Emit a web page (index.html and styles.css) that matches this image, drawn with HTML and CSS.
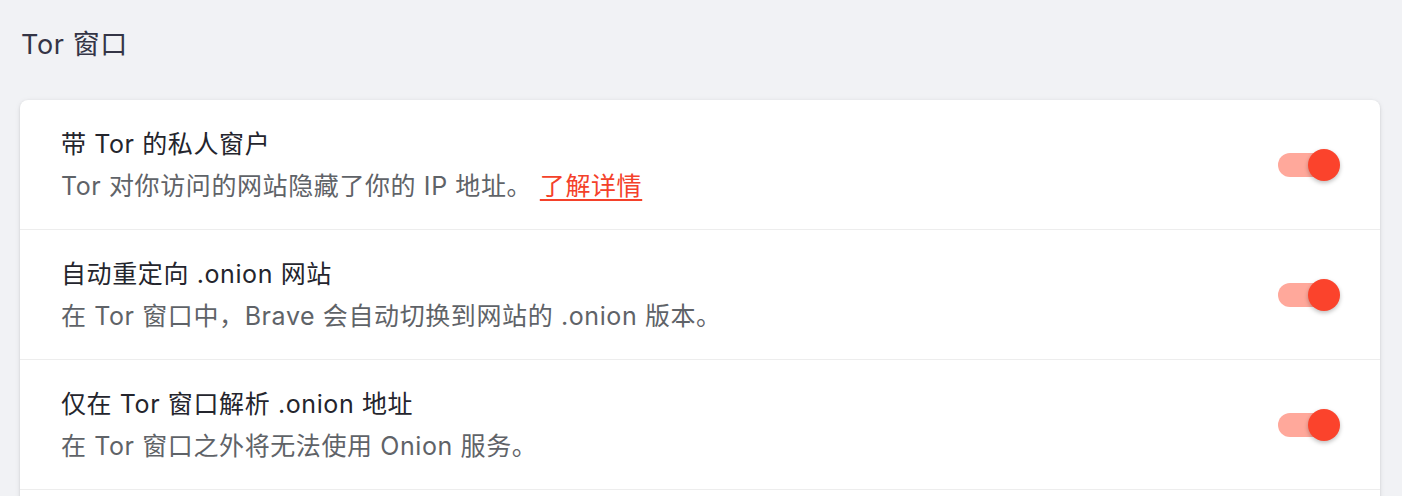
FILE: index.html
```html
<!DOCTYPE html>
<html lang="zh-CN">
<head>
    <meta charset="UTF-8">
    <title>Tor 窗口</title>
    <link rel="stylesheet" href="styles.css">
</head>
<body>
    <div class="page">
        <h2 class="section-title">Tor 窗口</h2>
        <div class="card">
            <div class="row">
                <div class="row-text">
                    <div class="row-label">带 Tor 的私人窗户</div>
                    <div class="row-sub">Tor 对你访问的网站隐藏了你的 IP 地址。 <a href="#" class="link">了解详情</a></div>
                </div>
                <div class="toggle on"><span class="track"></span><span class="knob"></span></div>
            </div>
            <div class="row">
                <div class="row-text">
                    <div class="row-label">自动重定向 .onion 网站</div>
                    <div class="row-sub">在 Tor 窗口中，Brave 会自动切换到网站的 .onion 版本。</div>
                </div>
                <div class="toggle on"><span class="track"></span><span class="knob"></span></div>
            </div>
            <div class="row">
                <div class="row-text">
                    <div class="row-label">仅在 Tor 窗口解析 .onion 地址</div>
                    <div class="row-sub">在 Tor 窗口之外将无法使用 Onion 服务。</div>
                </div>
                <div class="toggle on"><span class="track"></span><span class="knob"></span></div>
            </div>
            <div class="card-end"></div>
        </div>
    </div>
</body>
</html>
```

FILE: styles.css
```css
body {
    margin: 0;
    font-family: Inter, "Noto Sans CJK SC", sans-serif;
    background-color: #f1f2f5;
    color: #212529;
}
.page {
    padding: 0 22px 0 20px;
}
.section-title {
    margin: 0;
    padding: 29px 0 39px 1px;
    font-size: 27px;
    line-height: 32px;
    font-weight: 400;
    letter-spacing: 0.6px;
    color: #343546;
}
.card {
    background: white;
    border-radius: 8px;
    box-shadow: 0 1px 3px rgba(0, 0, 0, 0.12), 0 1px 6px rgba(0, 0, 0, 0.06);
}
.row {
    display: flex;
    align-items: center;
    justify-content: space-between;
    height: 129px;
    padding: 0 40px 0 41px;
    border-bottom: 1px solid #ededed;
}
.row-label {
    font-size: 25px;
    line-height: 42px;
    letter-spacing: 0.6px;
    color: #24252d;
}
.row-sub {
    font-size: 25px;
    line-height: 42px;
    letter-spacing: 0.6px;
    color: #5f6368;
}
.link {
    color: #f4412a;
    text-decoration: underline;
    text-underline-offset: 4px;
}
.card-end {
    height: 40px;
}
.toggle {
    position: relative;
    width: 62px;
    height: 32px;
    flex-shrink: 0;
}
.track {
    position: absolute;
    left: 0;
    top: 4px;
    width: 52px;
    height: 24px;
    border-radius: 12px;
    background: #ffa89b;
}
.knob {
    position: absolute;
    right: 0;
    top: 0;
    width: 32px;
    height: 32px;
    border-radius: 50%;
    background: #fb432c;
    box-shadow: 0 2px 4px rgba(0, 0, 0, 0.25);
}
```
